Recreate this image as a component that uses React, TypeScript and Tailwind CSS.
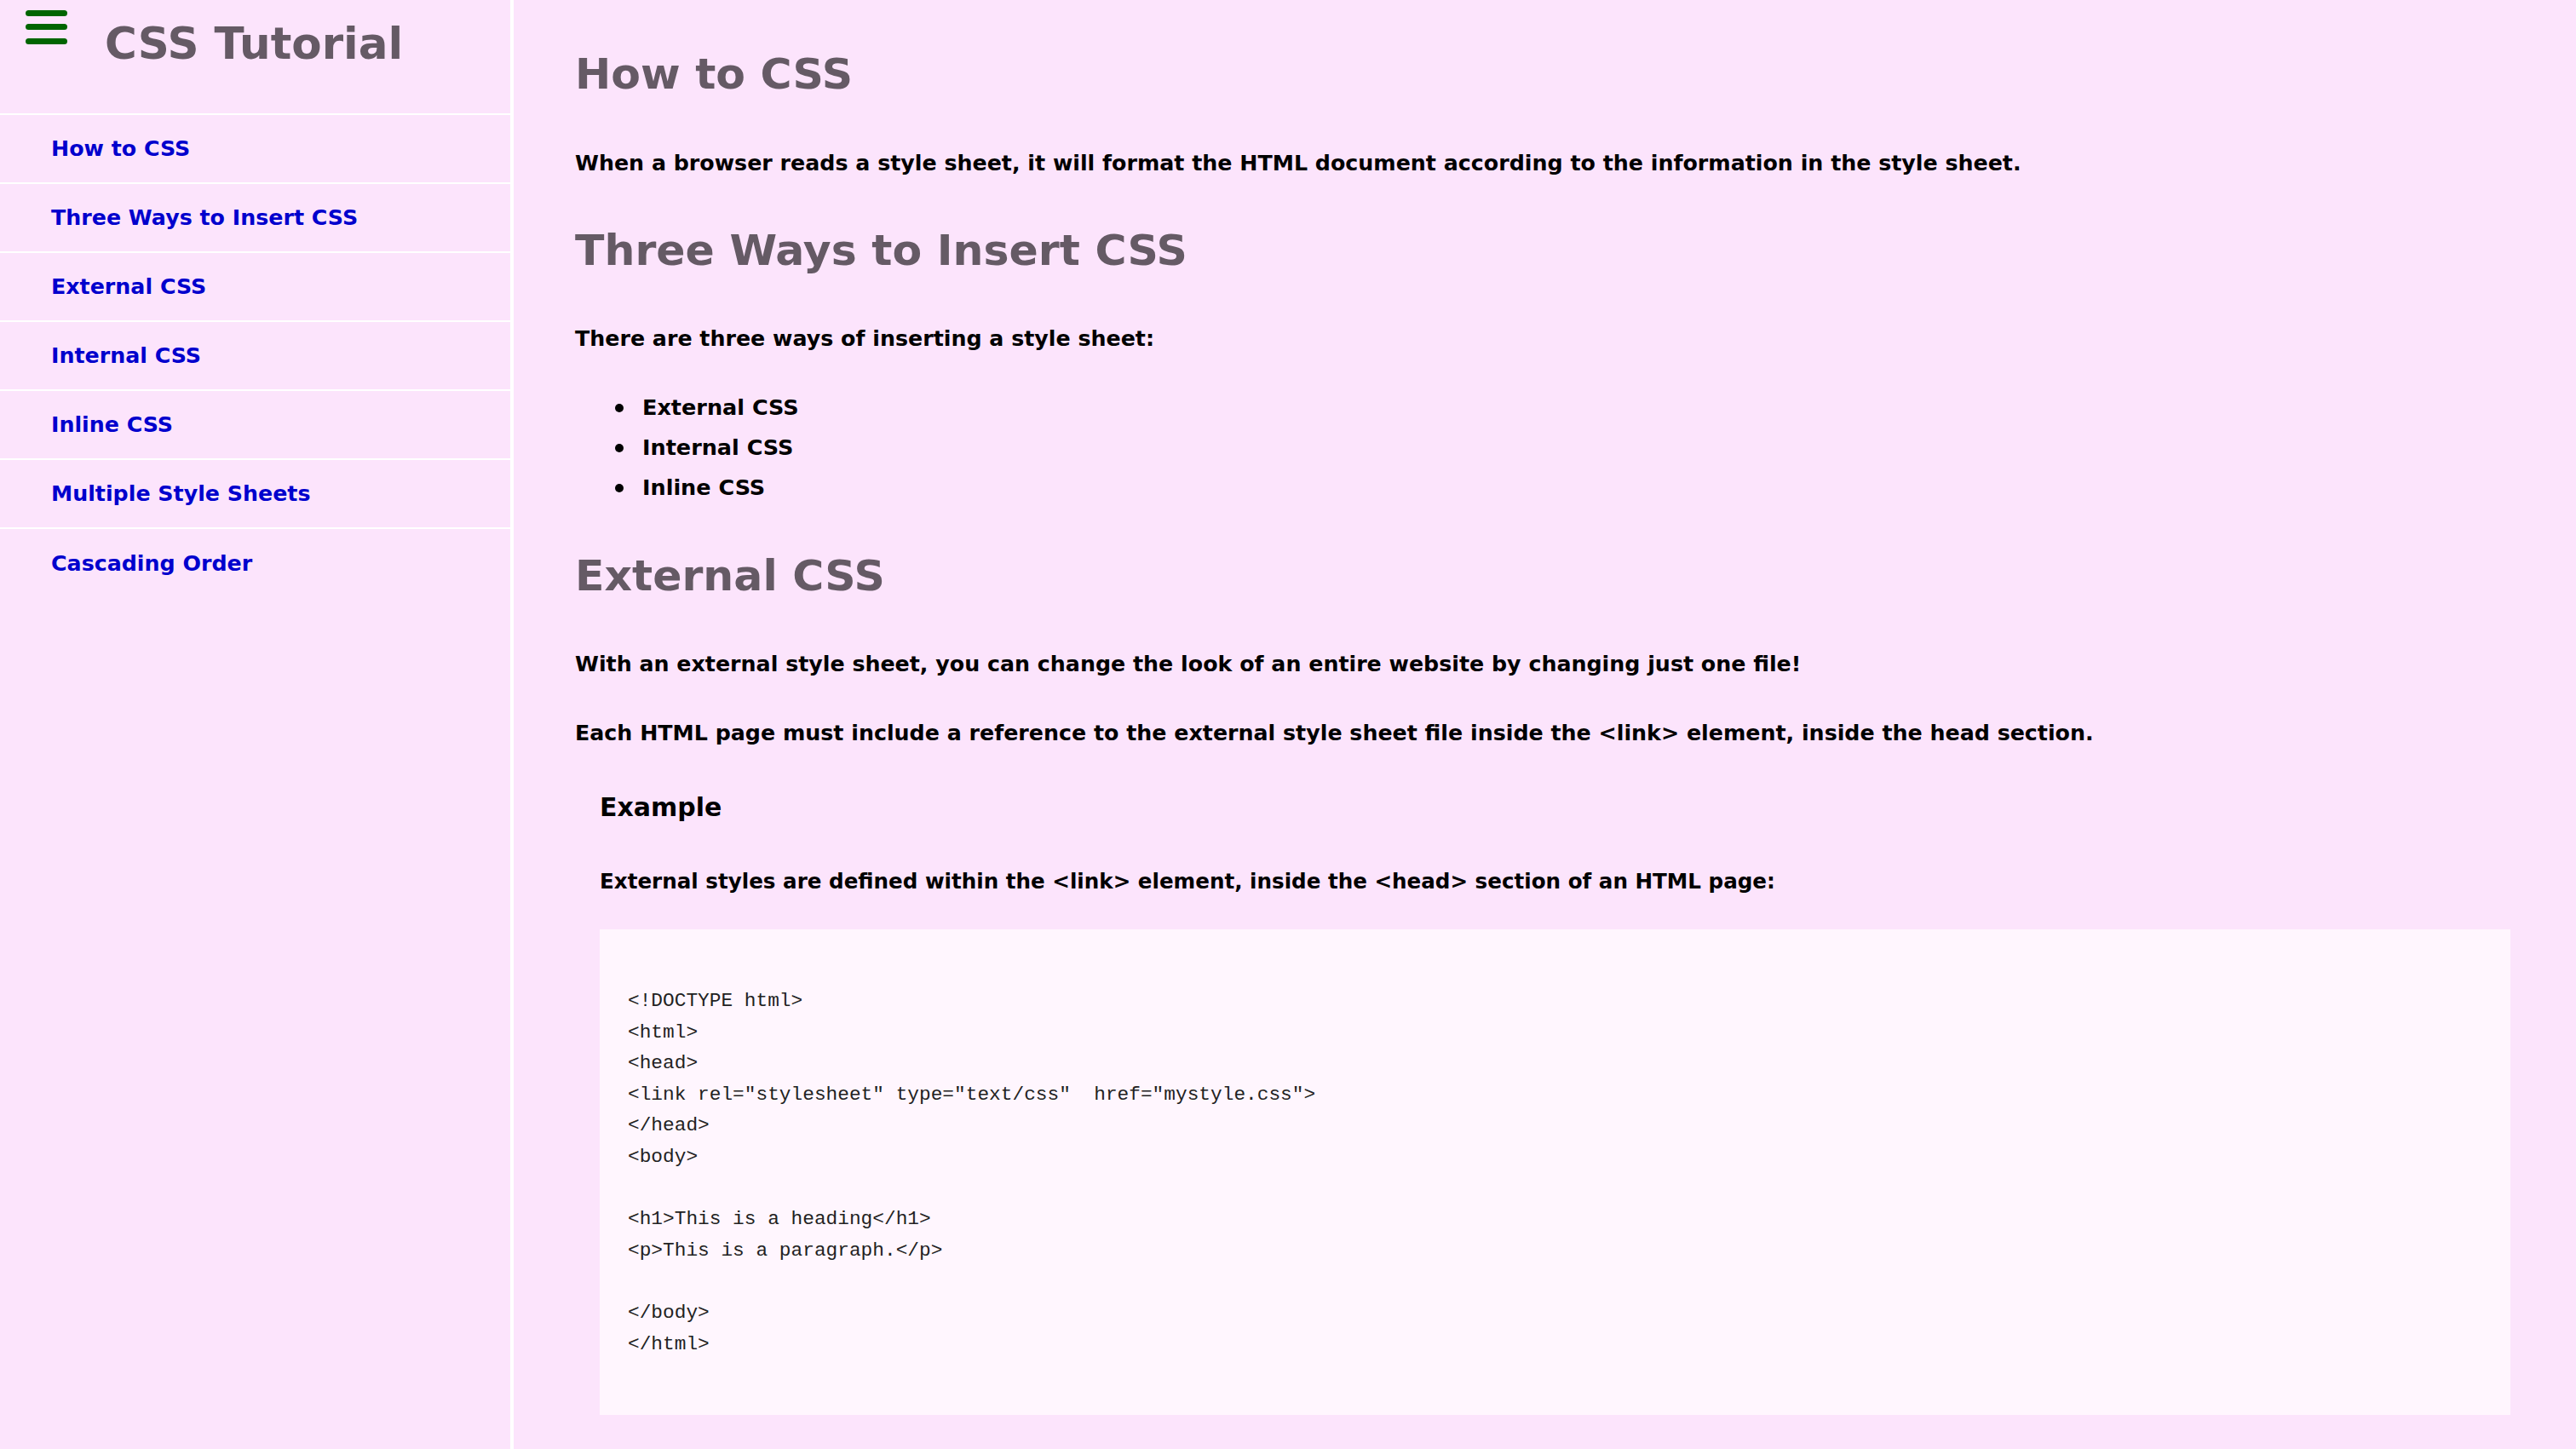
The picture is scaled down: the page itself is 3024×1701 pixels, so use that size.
import React from 'react';

const links = [
  'How to CSS',
  'Three Ways to Insert CSS',
  'External CSS',
  'Internal CSS',
  'Inline CSS',
  'Multiple Style Sheets',
  'Cascading Order',
];

const code = `<!DOCTYPE html>
<html>
<head>
<link rel="stylesheet" type="text/css"  href="mystyle.css">
</head>
<body>

<h1>This is a heading</h1>
<p>This is a paragraph.</p>

</body>
</html>`;

function Sidebar() {
  return (
    <aside className="w-[603px] shrink-0 bg-[#fce4fc] border-r-4 border-white flex flex-col">
      <div className="h-[135px] flex items-start border-b-2 border-white">
        <svg width="50" height="42" viewBox="0 0 50 42" className="ml-[30px] mt-[12px]">
          <rect x="0" y="0" width="49" height="7" rx="3.5" fill="#006400" />
          <rect x="0" y="16" width="49" height="7" rx="3.5" fill="#006400" />
          <rect x="0" y="33" width="49" height="7" rx="3.5" fill="#006400" />
        </svg>
        <h1 className="ml-[43px] mt-[19px] text-[51.5px] leading-[64px] font-bold text-[#655a65]">CSS Tutorial</h1>
      </div>
      <nav className="flex flex-col">
        {links.map((l, i) => (
          <a
            key={l}
            href="#"
            className={
              'h-[81px] flex items-center pl-[60px] text-[25.3px] font-bold text-[#0000cd] ' +
              (i < links.length - 1 ? 'border-b-2 border-white' : '')
            }
          >
            {l}
          </a>
        ))}
      </nav>
    </aside>
  );
}

function Bullet({ children }: { children: React.ReactNode }) {
  return (
    <li className="flex items-center">
      <span className="ml-[47px] mr-[22px] w-[10px] h-[10px] rounded-full bg-black" />
      <span>{children}</span>
    </li>
  );
}

export default function App() {
  return (
    <div
      className="flex min-h-[1701px] w-full bg-[#fce4fc] text-black"
      style={{ fontFamily: '"DejaVu Sans", "Open Sans", sans-serif' }}
    >
      <Sidebar />
      <main className="flex-1 pl-[72px] pr-[48px] flex flex-col">
        <h1 className="mt-[55px] text-[50.5px] leading-[64px] font-bold text-[#655a65]">How to CSS</h1>
        <p className="mt-[56px] text-[25.3px] leading-[34px] font-bold">
          When a browser reads a style sheet, it will format the HTML document according to the information in the style sheet.
        </p>
        <h2 className="mt-[53px] text-[50.5px] leading-[64px] font-bold text-[#655a65]">Three Ways to Insert CSS</h2>
        <p className="mt-[55px] text-[25.3px] leading-[34px] font-bold">There are three ways of inserting a style sheet:</p>
        <ul className="mt-[40px] text-[25.5px] leading-[47px] font-bold">
          <Bullet>External CSS</Bullet>
          <Bullet>Internal CSS</Bullet>
          <Bullet>Inline CSS</Bullet>
        </ul>
        <h2 className="mt-[48px] text-[50.5px] leading-[64px] font-bold text-[#655a65]">External CSS</h2>
        <p className="mt-[55px] text-[25.3px] leading-[34px] font-bold">
          With an external style sheet, you can change the look of an entire website by changing just one file!
        </p>
        <p className="mt-[47px] text-[25.3px] leading-[34px] font-bold">
          Each HTML page must include a reference to the external style sheet file inside the &lt;link&gt; element, inside the head section.
        </p>
        <div className="px-[29px] flex flex-col">
          <h3 className="mt-[53px] text-[30px] leading-[34px] font-bold">Example</h3>
          <p className="mt-[53px] text-[24.6px] leading-[34px] font-bold">
            External styles are defined within the &lt;link&gt; element, inside the &lt;head&gt; section of an HTML page:
          </p>
          <div className="mt-[39px] h-[570px] bg-[#fff6fe] pl-[33px] pt-[66px]">
            <pre
              className="text-[22.8px] leading-[36.6px] text-[#222]"
              style={{ fontFamily: '"Liberation Mono", monospace' }}
            >
              {code}
            </pre>
          </div>
        </div>
      </main>
    </div>
  );
}
